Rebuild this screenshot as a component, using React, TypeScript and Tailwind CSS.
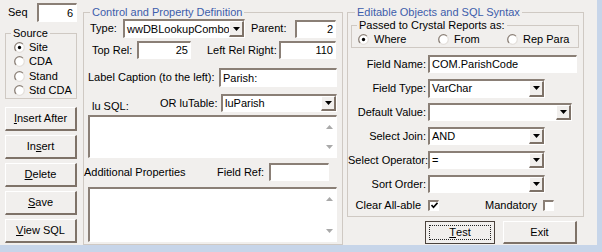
import type { ReactNode } from 'react';
import clsx from 'clsx';

const sunken =
  'border-t-2 border-l-2 border-b border-r border-t-[#8a7f76] border-l-[#8a7f76] border-b-white border-r-white bg-white';
const raised =
  'border-t border-l border-b-2 border-r-2 border-t-white border-l-white border-b-[#7e7268] border-r-[#7e7268] bg-[#f1efed]';

function Group({
  title,
  children,
  className,
  titleClassName,
}: {
  title: string;
  children: ReactNode;
  className?: string;
  titleClassName?: string;
}) {
  return (
    <div className={clsx('flex flex-col border border-[#cfc9c3]', className)}>
      <span
        className={clsx(
          '-mt-[7px] block self-start bg-[#f1efed] px-[2px] leading-[13px]',
          titleClassName,
        )}
      >
        {title}
      </span>
      {children}
    </div>
  );
}

function Field({
  value,
  right,
  className,
}: {
  value?: string;
  right?: boolean;
  className?: string;
}) {
  return (
    <div
      className={clsx(
        sunken,
        'flex items-center overflow-hidden whitespace-nowrap px-[2px]',
        right && 'justify-end',
        className,
      )}
    >
      {value}
    </div>
  );
}

function Arrow({ up, color = '#000' }: { up?: boolean; color?: string }) {
  return (
    <svg width="7" height="4" viewBox="0 0 7 4">
      <path d={up ? 'M0 4h7L3.5 0z' : 'M0 0h7L3.5 4z'} fill={color} />
    </svg>
  );
}

function Combo({ value, className }: { value?: string; className?: string }) {
  return (
    <div className={clsx(sunken, 'flex items-stretch', className)}>
      <span className="flex flex-1 items-center overflow-hidden whitespace-nowrap pl-[2px]">
        {value}
      </span>
      <span className={clsx(raised, 'flex w-[15px] items-center justify-center')}>
        <Arrow />
      </span>
    </div>
  );
}

function Memo({ className }: { className?: string }) {
  return (
    <div className={clsx(sunken, 'flex justify-end', className)}>
      <div className="flex w-[14px] flex-col items-center justify-between py-[8px]">
        <Arrow up color="#a9a9a9" />
        <Arrow color="#a9a9a9" />
      </div>
    </div>
  );
}

function Radio({ checked }: { checked?: boolean }) {
  return (
    <svg width="11" height="11" viewBox="0 0 12 12" className="shrink-0">
      <circle cx="6" cy="6" r="5.2" fill="#fff" />
      <path d="M2.3 9.7A5.2 5.2 0 0 0 9.7 2.3" fill="none" stroke="#e4e0dc" strokeWidth="1.4" />
      <path d="M2.3 9.7A5.2 5.2 0 0 1 9.7 2.3" fill="none" stroke="#8a7f76" strokeWidth="1.4" />
      {checked && <circle cx="6" cy="6" r="1.8" fill="#000" />}
    </svg>
  );
}

function Check({ checked }: { checked?: boolean }) {
  return (
    <span className={clsx(sunken, 'flex size-[11px] items-center justify-center')}>
      {checked && (
        <svg width="7" height="7" viewBox="0 0 7 7">
          <path d="M0.5 3l2 2.2L6.5 0.8" fill="none" stroke="#000" strokeWidth="1.6" />
        </svg>
      )}
    </span>
  );
}

function Btn({ children, className }: { children: ReactNode; className?: string }) {
  return (
    <button type="button" className={clsx(raised, 'flex items-center justify-center', className)}>
      {children}
    </button>
  );
}

function Row({ label, children }: { label: string; children: ReactNode }) {
  return (
    <div className="flex h-[18px] items-center">
      <span className="w-[80px] whitespace-nowrap pr-[2px] text-right">{label}</span>
      {children}
    </div>
  );
}

export default function App() {
  return (
    <div className="flex h-[252px] w-[602px] bg-[#c7d5e9] font-['Liberation_Sans',Arial,sans-serif] text-[11px] leading-[13px] text-black">
      <div className="flex h-[245px] w-[597px] items-start bg-[#f1efed] pl-[5px]">
        {/* left column */}
        <div className="flex w-[72px] flex-col">
          <div className="mt-[3px] flex h-[19px] items-center">
            <span className="w-[32px] pl-[3px]">Seq</span>
            <Field className="h-[19px] w-[40px] pr-[3px]" value="6" right />
          </div>

          <Group title="Source" className="mt-[11px] w-[72px]" titleClassName="ml-[5px]">
            {['Site', 'CDA', 'Stand', 'Std CDA'].map((s, i) => (
              <div key={s} className="flex h-[14.5px] items-center gap-[4px] pl-[8px]">
                <Radio checked={i === 0} />
                {s}
              </div>
            ))}
          </Group>

          <div className="mt-[8px] flex flex-col gap-[4px]">
            <Btn className="h-[24px]">
              <span className="underline">I</span>nsert After
            </Btn>
            <Btn className="h-[24px]">
              In<span className="underline">s</span>ert
            </Btn>
            <Btn className="h-[24px]">
              <span className="underline">D</span>elete
            </Btn>
            <Btn className="h-[24px]">
              <span className="underline">S</span>ave
            </Btn>
            <Btn className="h-[24px]">
              <span className="underline">V</span>iew SQL
            </Btn>
          </div>
        </div>

        {/* control and property definition */}
        <Group
          title="Control and Property Definition"
          className="ml-[6px] mt-[12px] h-[233px] w-[260px]"
          titleClassName="ml-[6px] text-[#3d5dab]"
        >
          <div className="flex h-[19px] items-center pl-[6px]">
            <span className="w-[33px]">Type:</span>
            <Combo className="h-[19px] w-[122px]" value="wwDBLookupCombo" />
            <span className="ml-[6px] w-[44px]">Parent:</span>
            <Field className="h-[18px] w-[41px]" value="2" right />
          </div>

          <div className="mt-[3px] flex h-[18px] items-center pl-[8px]">
            <span className="w-[45px]">Top Rel:</span>
            <Field className="h-[18px] w-[54px]" value="25" right />
            <span className="ml-[16px] w-[72px] whitespace-nowrap">Left Rel Right:</span>
            <Field className="h-[18px] w-[57px]" value="110" right />
          </div>

          <div className="mt-[9px] flex h-[19px] items-center pl-[4px]">
            <span className="w-[131px] whitespace-nowrap">Label Caption (to the left):</span>
            <Field className="h-[19px] w-[118px]" value="Parish:" />
          </div>

          <div className="mt-[7px] flex h-[18px] items-center pl-[8px]">
            <span className="w-[68px] translate-y-[3px]">lu SQL:</span>
            <span className="w-[61px] whitespace-nowrap">OR luTable:</span>
            <Combo className="h-[18px] w-[116px]" value="luParish" />
          </div>

          <Memo className="ml-[4px] mt-[3px] h-[43px] w-[249px]" />

          <div className="mt-[5px] flex h-[18px] items-center">
            <span className="w-[133px] whitespace-nowrap">Additional Properties</span>
            <span className="w-[52px]">Field Ref:</span>
            <Field className="h-[18px] w-[60px]" />
          </div>

          <Memo className="ml-[4px] mt-[6px] h-[55px] w-[249px]" />
        </Group>

        {/* editable objects */}
        <div className="ml-[4px] mt-[12px] flex flex-col">
          <Group
            title="Editable Objects and SQL Syntax"
            className="h-[205px] w-[237px]"
            titleClassName="ml-[7px] text-[#3d5dab]"
          >
            <Group
              title="Passed to Crystal Reports as:"
              className="ml-[3px] mt-[6px] w-[228px] pb-[1px]"
              titleClassName="ml-[5px]"
            >
              <div className="flex h-[14px] items-center pl-[6px]">
                <span className="flex w-[80px] items-center gap-[5px]">
                  <Radio checked />
                  Where
                </span>
                <span className="flex w-[69px] items-center gap-[5px]">
                  <Radio />
                  From
                </span>
                <span className="flex items-center gap-[5px]">
                  <Radio />
                  Rep Para
                </span>
              </div>
            </Group>

            <div className="mt-[7px] flex flex-col gap-[6px]">
              <Row label="Field Name:">
                <Field className="h-[18px] w-[149px]" value="COM.ParishCode" />
              </Row>
              <Row label="Field Type:">
                <Combo className="h-[19px] w-[117px]" value="VarChar" />
              </Row>
              <Row label="Default Value:">
                <Combo className="h-[18px] w-[144px]" />
              </Row>
              <Row label="Select Join:">
                <Combo className="h-[18px] w-[117px]" value="AND" />
              </Row>
              <Row label="Select Operator:">
                <Combo className="h-[18px] w-[117px]" value="=" />
              </Row>
              <Row label="Sort Order:">
                <Combo className="h-[18px] w-[117px]" />
              </Row>
            </div>

            <div className="mt-[6px] flex h-[12px] items-center">
              <span className="w-[80px] whitespace-nowrap pr-[7px] text-right">Clear All-able</span>
              <Check checked />
              <span className="ml-[46px]">Mandatory</span>
              <span className="ml-[6px]">
                <Check />
              </span>
            </div>
          </Group>

          <div className="mt-[4px] flex h-[23px] gap-[8px] pl-[78px]">
            <button
              type="button"
              className="flex w-[70px] border border-[#4a423c] bg-[#f1efed] p-[3px]"
            >
              <span className="flex flex-1 items-center justify-center border border-dotted border-[#222]">
                <span className="underline">T</span>est
              </span>
            </button>
            <Btn className="w-[74px]">Exit</Btn>
          </div>
        </div>
      </div>
    </div>
  );
}
